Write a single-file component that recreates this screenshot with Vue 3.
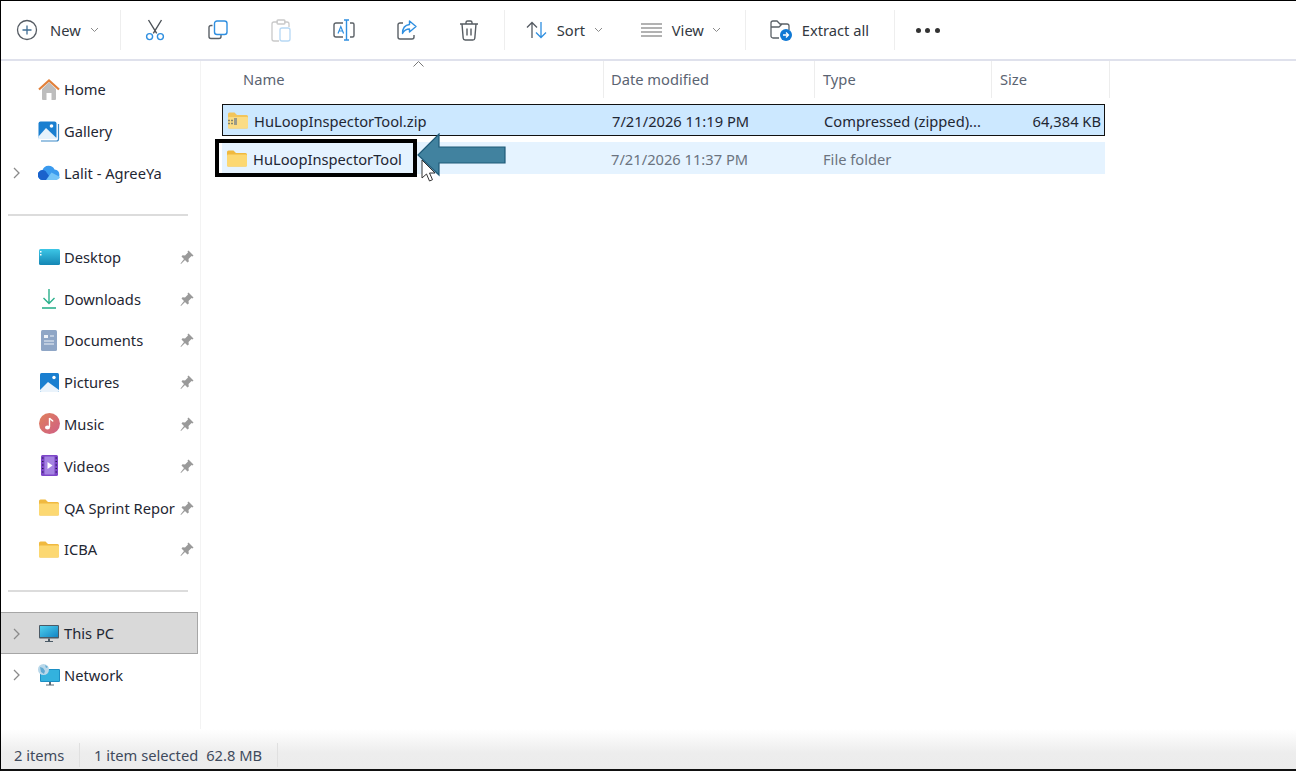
<template>
  <div class="window">
    <header class="toolbar">
      <button class="tool new">
        <svg width="22" height="22" viewBox="0 0 22 22" fill="none" stroke="#555b63" stroke-width="1.3"><circle cx="11" cy="11" r="9.5" /><path d="M11 6.500v9M6.500 11h9" stroke="#3f6d94" /></svg>
        <span class="tool-label">New</span>
        <svg class="chev" width="9" height="6" viewBox="0 0 9 6" fill="none" stroke="#8a8a8a"><path d="M1 1l3.500 3.500L8 1" /></svg>
      </button>
      <i class="sep"></i>
      <div class="icon-tools">
        <button class="icon-tool">
          <svg width="20" height="22" viewBox="0 0 20 22" fill="none" stroke-width="1.4"><path d="M3.500 1l8.200 13.400M16.500 1L8.300 14.400" stroke="#4c5258" /><circle cx="4.600" cy="17.600" r="3" stroke="#2f8fe0" /><circle cx="15.400" cy="17.600" r="3" stroke="#2f8fe0" /></svg>
        </button>
        <button class="icon-tool">
          <svg width="20" height="20" viewBox="0 0 20 20" fill="none" stroke-width="1.4"><path d="M4.500 5.500H3A2 2 0 0 0 1 7.500v9a2 2 0 0 0 2 2h8a2 2 0 0 0 2-2V15" stroke="#5a6066" /><rect x="6.500" y="1" width="12.500" height="13.500" rx="2.500" stroke="#2f8fe0" /></svg>
        </button>
        <button class="icon-tool">
          <svg width="20" height="23" viewBox="0 0 20 23" fill="none" stroke-width="1.3"><path d="M7 3H3a2 2 0 0 0-2 2v15a2 2 0 0 0 2 2h5M13 3h3a2 2 0 0 1 2 2v3" stroke="#c9c9c9" /><rect x="6" y="1" width="8" height="4" rx="1" stroke="#c9c9c9" /><rect x="9" y="9" width="10" height="13" rx="2" stroke="#b6d8f4" /></svg>
        </button>
        <button class="icon-tool">
          <svg width="22" height="22" viewBox="0 0 22 22" fill="none" stroke-width="1.4"><path d="M10 4H3a2 2 0 0 0-2 2v10a2 2 0 0 0 2 2h7M17 4h2.500A1.500 1.500 0 0 1 21 5.500v11a1.500 1.500 0 0 1-1.500 1.500H17" stroke="#5a6066" /><path d="M13.500 1v20M11 1h5M11 21h5" stroke="#2f8fe0" /><path d="M5 14.500L7.800 7.500 10.600 14.500M6 12h3.600" stroke="#2f8fe0" stroke-width="1.200" /></svg>
        </button>
        <button class="icon-tool">
          <svg width="20" height="20" viewBox="0 0 20 20" fill="none" stroke-width="1.4"><path d="M6 3H3a2 2 0 0 0-2 2v12a2 2 0 0 0 2 2h12a2 2 0 0 0 2-2v-2" stroke="#5a6066" /><path d="M12.500 1L19 6.500 12.500 12V9C9 9 7 10.500 5.500 13.500 5.500 8.500 8 5 12.500 4.500z" stroke="#2f8fe0" stroke-linejoin="round" /></svg>
        </button>
        <button class="icon-tool">
          <svg width="20" height="21" viewBox="0 0 20 21" fill="none" stroke="#565c62" stroke-width="1.4"><path d="M1 4h18M7 4V2.500A1.500 1.500 0 0 1 8.500 1h3A1.500 1.500 0 0 1 13 2.500V4M3 4l1.200 14.200A2 2 0 0 0 6.200 20h7.600a2 2 0 0 0 2-1.800L17 4M8 8.500v7M12 8.500v7" /></svg>
        </button>
      </div>
      <i class="sep"></i>
      <button class="tool sort">
        <svg width="21" height="18" viewBox="0 0 21 18" fill="none" stroke-width="1.3"><path d="M6 17V1.500M1 6.500l5-5 5 5" stroke="#555b63" /><path d="M15 1v15.500M10 11.500l5 5 5-5" stroke="#2f8fe0" /></svg>
        <span class="tool-label">Sort</span>
        <svg class="chev" width="9" height="6" viewBox="0 0 9 6" fill="none" stroke="#8a8a8a"><path d="M1 1l3.500 3.500L8 1" /></svg>
      </button>
      <button class="tool view">
        <svg width="21" height="14" viewBox="0 0 21 14" fill="none" stroke="#666" stroke-width="1.100"><path d="M0 1h21M0 5h21M0 9h21M0 13h21" /></svg>
        <span class="tool-label">View</span>
        <svg class="chev" width="9" height="6" viewBox="0 0 9 6" fill="none" stroke="#8a8a8a"><path d="M1 1l3.500 3.500L8 1" /></svg>
      </button>
      <i class="sep"></i>
      <button class="tool extract">
        <svg width="22" height="21" viewBox="0 0 22 21" fill="none"><path d="M9 18H3a2 2 0 0 1-2-2V3a2 2 0 0 1 2-2h4l3 3h7a2 2 0 0 1 2 2v4M1 7h8l3-3" stroke="#5a6066" stroke-width="1.300" /><circle cx="16" cy="15" r="6" fill="#0f78d4" /><path d="M13 15h5.500M16 12.500l2.500 2.500-2.500 2.500" stroke="#fff" stroke-width="1.300" /></svg>
        <span class="tool-label">Extract all</span>
      </button>
      <i class="sep"></i>
      <button class="more"><b></b><b></b><b></b></button>
    </header>

    <div class="body">
      <nav class="sidebar">
        <template v-for="group in navGroups" :key="group[0].name">
          <div
            v-for="item in group"
            :key="item.name"
            class="nav-row"
            :class="{ active: item.active }"
          >
            <svg v-if="item.expand" class="expander" width="7" height="12" viewBox="0 0 7 12" fill="none" stroke="#8a8a8a" stroke-width="1.300"><path d="M1 1l5 5-5 5" /></svg>
            <span class="nav-icon" v-html="icons[item.icon]"></span>
            <span class="nav-name">{{ item.name }}</span>
            <svg v-if="item.pin" class="pin" width="14" height="14" viewBox="0 0 14 14" fill="#9a9a9a"><path d="M8.500 0.500L13.500 5.500 12.500 6.500 11.500 6 8.500 9 8.800 11.500 7.500 12.500 1.500 6.500 2.500 5.200 5 5.500 8 2.500 7.500 1.500zM4 9l1 1-4 4-.5-.500z" /></svg>
          </div>
          <hr class="nav-divider" />
        </template>
      </nav>

      <main class="files">
        <div class="sort-caret">
          <svg width="11" height="6" viewBox="0 0 11 6" fill="none" stroke="#777"><path d="M.5 5.500l5-5 5 5" /></svg>
        </div>
        <div class="columns">
          <div class="col first">Name</div>
          <div class="col second">Date modified</div>
          <div class="col">Type</div>
          <div class="col">Size</div>
        </div>

        <div class="rows">
          <div class="file-row selected">
            <div class="cell name">
              <svg width="20" height="17" viewBox="0 0 20 17"><path d="M0 2a1.500 1.500 0 0 1 1.500-1.500h5L9 3h9.500A1.500 1.500 0 0 1 20 4.500V15a1.500 1.500 0 0 1-1.500 1.500h-17A1.500 1.500 0 0 1 0 15z" fill="#f2c55c" /><rect y="5" width="20" height="11.500" rx="1" fill="#fbdc85" /><path d="M0 8.500h9M0 11.500h9" stroke="#85856e" stroke-width="1.300" stroke-dasharray="2 1" /><rect x="6" y="6" width="3" height="7" fill="#9b9b8a" /></svg>
              <span>HuLoopInspectorTool.zip</span>
            </div>
            <div class="cell">7/21/2026 11:19 PM</div>
            <div class="cell">Compressed (zipped)...</div>
            <div class="cell size">64,384 KB</div>
          </div>
          <div class="file-row folder">
            <div class="cell name">
              <svg width="20" height="17" viewBox="0 0 20 17"><path d="M0 2a1.500 1.500 0 0 1 1.500-1.500h5L9 3h9.500A1.500 1.500 0 0 1 20 4.500V15a1.500 1.500 0 0 1-1.500 1.500h-17A1.500 1.500 0 0 1 0 15z" fill="#f0b93f" /><rect y="4.500" width="20" height="12" rx="1" fill="#fcd872" /></svg>
              <span>HuLoopInspectorTool</span>
            </div>
            <div class="cell dim">7/21/2026 11:37 PM</div>
            <div class="cell dim">File folder</div>
            <div class="cell"></div>
          </div>
        </div>

        <div class="callout"></div>
        <svg class="arrow" width="90" height="50" viewBox="0 0 90 50">
          <path d="M1 22L22 1V14H88V30H22V42z" fill="#41829f" stroke="#1f5a78" stroke-width="1.200" />
        </svg>
        <svg class="cursor" width="16" height="24" viewBox="0 0 16 24">
          <path d="M1 1v18l4.500-4 3 7 3-1.300-3-6.700H14z" fill="#fff" stroke="#333" stroke-width="1" />
        </svg>
      </main>
    </div>

    <footer class="status">
      <span class="count">2 items</span>
      <i class="status-sep"></i>
      <span class="selection">1 item selected</span>
      <span class="bytes">62.8 MB</span>
      <i class="status-sep"></i>
    </footer>
  </div>
</template>

<script setup>
const folder = '<svg width="20" height="17" viewBox="0 0 20 17"><path d="M0 2a1.500 1.500 0 0 1 1.500-1.500h5L9 3h9.500A1.500 1.500 0 0 1 20 4.500V15a1.500 1.500 0 0 1-1.500 1.500h-17A1.500 1.500 0 0 1 0 15z" fill="#f0b93f"/><rect y="4.500" width="20" height="12" rx="1" fill="#fcd872"/></svg>'

const icons = {
  home: '<svg width="22" height="21" viewBox="0 0 22 21"><path d="M4 10L11 3l7 7v10a1 1 0 0 1-1 1h-3.500v-7h-5v7H5a1 1 0 0 1-1-1z" fill="#bdbdbd"/><path d="M1 10.500L11 1.500l10 9" fill="none" stroke="#e2803a" stroke-width="2.200"/></svg>',
  gallery: '<svg width="22" height="21" viewBox="0 0 22 21"><path d="M20.500 3v15a2 2 0 0 1-2 2H3" fill="none" stroke="#3c8ac8" stroke-width="1.200"/><rect x="0.500" y="0.500" width="18" height="17.500" rx="2" fill="#1a7fd0"/><path d="M.5 15.500L8 7l10.500 10v1H.5z" fill="#e6f2fb"/><circle cx="13.500" cy="5" r="1.800" fill="#fff"/></svg>',
  cloud: '<svg width="22" height="15" viewBox="0 0 22 15"><path d="M5 15a5 5 0 0 1-.500-10A6.500 6.500 0 0 1 16.500 4.500 5.300 5.300 0 0 1 17 15z" fill="#3a9aee"/><path d="M5 15a5 5 0 0 1-.500-10c1 0 2 .3 3 1L14 15z" fill="#1a62cc"/><path d="M8 15l5.500-7.500L22 12c-.500 2-2.500 3-5 3z" fill="#74c4f8"/></svg>',
  desktop: '<svg width="21" height="16" viewBox="0 0 21 16"><defs><linearGradient id="dsk" x1="0" y1="0" x2="0" y2="1"><stop offset="0" stop-color="#3cc6e6"/><stop offset="1" stop-color="#1486b4"/></linearGradient></defs><rect width="21" height="16" rx="1.500" fill="url(#dsk)"/><rect x="1" y="2" width="1.500" height="1.500" fill="#fff"/><rect x="1" y="5" width="1.500" height="1.500" fill="#fff"/></svg>',
  downloads: '<svg width="16" height="20" viewBox="0 0 16 20" fill="none" stroke="#2bb08c" stroke-width="1.400"><path d="M8 0v14M2.500 9L8 14.500 13.500 9"/><path d="M1 19h14" stroke-width="1.600"/></svg>',
  documents: '<svg width="16" height="21" viewBox="0 0 16 21"><rect width="16" height="21" rx="1.500" fill="#8fa6c6"/><path d="M3 5h4v3H3z" fill="#eef2f8"/><path d="M9 6h4M3 11h10M3 14h10" stroke="#eef2f8" stroke-width="1.100"/></svg>',
  pictures: '<svg width="19" height="19" viewBox="0 0 19 19"><rect width="19" height="19" rx="1.500" fill="#1a7fd0"/><path d="M0 17L8 9l11 8v.500A1.500 1.500 0 0 1 17.500 19h-16A1.500 1.500 0 0 1 0 17.500z" fill="#eaf3fb"/><circle cx="14" cy="4.500" r="1.700" fill="#fff"/></svg>',
  music: '<svg width="21" height="21" viewBox="0 0 21 21"><defs><linearGradient id="mus" x1="0" y1="0" x2="1" y2="1"><stop offset="0" stop-color="#e0805a"/><stop offset="1" stop-color="#cf5f86"/></linearGradient></defs><circle cx="10.500" cy="10.500" r="10.500" fill="url(#mus)"/><path d="M10.500 5v9" stroke="#fff" stroke-width="1.400"/><path d="M10.500 5c1 1.800 3 2 3.500 3.500" stroke="#fff" stroke-width="1.400" fill="none"/><ellipse cx="8.500" cy="14.500" rx="2.500" ry="2" fill="#fff"/></svg>',
  videos: '<svg width="17" height="21" viewBox="0 0 17 21"><rect width="17" height="21" rx="1.500" fill="#7d46c8"/><rect x="3.500" y="1.500" width="10" height="18" fill="#a583e2"/><path d="M6.500 7l5 3.500-5 3.500z" fill="#fff"/><path d="M1 3h1.500M1 6.500h1.500M1 10h1.500M1 13.500h1.500M1 17h1.500M14.500 3H16M14.500 6.500H16M14.500 10H16M14.500 13.500H16M14.500 17H16" stroke="#2b1b55" stroke-width="1.200"/></svg>',
  folder,
  pc: '<svg width="20" height="17" viewBox="0 0 20 17"><defs><linearGradient id="pc" x1="0" y1="0" x2="1" y2="1"><stop offset="0" stop-color="#4fd0ee"/><stop offset="1" stop-color="#1385c4"/></linearGradient></defs><rect width="20" height="13.500" rx="1" fill="#4b5a66"/><rect x="1" y="1" width="18" height="11" fill="url(#pc)"/><path d="M9 13.500h2V16H9zM6 16h8v1H6z" fill="#4b5a66"/></svg>',
  network: '<svg width="22" height="22" viewBox="0 0 22 22"><rect x="2" y="5" width="20" height="13" rx="1" fill="#1c8fc4"/><rect x="3" y="6" width="18" height="11" fill="#33b2de"/><path d="M11 18h2v2.500h-2zM8 20.500h8v1H8z" fill="#5b6a76"/><circle cx="5.500" cy="5.500" r="5.500" fill="#b9d8ea"/><path d="M2 3l3 1 2 3-1 3-3-2zM7 1l3 2-2 1z" fill="#5fa9d2"/></svg>'
}

const navGroups = [
  [
    { name: 'Home', icon: 'home' },
    { name: 'Gallery', icon: 'gallery' },
    { name: 'Lalit - AgreeYa', icon: 'cloud', expand: true }
  ],
  [
    { name: 'Desktop', icon: 'desktop', pin: true },
    { name: 'Downloads', icon: 'downloads', pin: true },
    { name: 'Documents', icon: 'documents', pin: true },
    { name: 'Pictures', icon: 'pictures', pin: true },
    { name: 'Music', icon: 'music', pin: true },
    { name: 'Videos', icon: 'videos', pin: true },
    { name: 'QA Sprint Repor', icon: 'folder', pin: true },
    { name: 'ICBA', icon: 'folder', pin: true }
  ],
  [
    { name: 'This PC', icon: 'pc', expand: true, active: true },
    { name: 'Network', icon: 'network', expand: true }
  ]
]
</script>

<style>
html, body { margin: 0; overflow: hidden; background: #fff; }
</style>

<style scoped>
.window {
  width: 1296px;
  height: 771px;
  box-sizing: border-box;
  border-top: 1px solid #000;
  border-left: 1px solid #000;
  border-bottom: 2px solid #111;
  display: flex;
  flex-direction: column;
  overflow: hidden;
  font-family: "Noto Sans", "Open Sans", sans-serif;
  font-size: 14.700px;
  color: #1c2430;
  background: #fff;
}
button {
  all: unset;
  display: flex;
  align-items: center;
  justify-content: center;
  box-sizing: border-box;
}
.toolbar {
  height: 60px;
  flex: none;
  display: flex;
  align-items: center;
  box-sizing: border-box;
  border-bottom: 2px solid #dfe1ec;
}
.tool { height: 40px; font-size: 14.700px; color: #33393f; }
.tool-label { white-space: nowrap; }
.new { width: 119px; justify-content: flex-start; padding-left: 15px; }
.new .tool-label { margin-left: 12px; }
.new .chev { margin-left: 9px; }
.sort { width: 108px; justify-content: flex-start; padding-left: 21px; }
.sort .tool-label { margin-left: 10px; }
.sort .chev { margin-left: 9px; }
.view { width: 132px; justify-content: flex-start; padding-left: 28px; }
.view .tool-label { margin-left: 10px; }
.view .chev { margin-left: 8px; }
.extract { width: 148px; justify-content: flex-start; padding-left: 24px; }
.extract .tool-label { margin-left: 10px; }
.sep { width: 1px; height: 40px; flex: none; background: #eeeeee; }
.icon-tools { display: flex; padding: 0 3px; }
.icon-tool { width: 62.800px; height: 40px; }
.more { display: flex; gap: 4.500px; margin-left: 21px; }
.more b { width: 5px; height: 5px; border-radius: 50%; background: #333; }

.body { flex: 1; display: flex; min-height: 0; }
.sidebar {
  width: 200px;
  flex: none;
  box-sizing: border-box;
  padding-top: 7.500px;
  border-right: 1px solid #f3f3f3;
}
.nav-row {
  height: 41.800px;
  width: 197px;
  box-sizing: border-box;
  display: flex;
  align-items: center;
  position: relative;
  padding-left: 37px;
}
.nav-row.active {
  background: #d9d9d9;
  border: 1px solid #a6a6a6;
  border-left: none;
  padding-left: 37px;
}
.expander { position: absolute; left: 12px; top: 15px; }
.nav-icon {
  width: 22px;
  flex: none;
  display: flex;
  align-items: center;
  justify-content: center;
}
.nav-name { margin-left: 4px; white-space: nowrap; color: #1f2733; }
.pin { position: absolute; left: 179px; top: 14px; }
.nav-divider {
  width: 180px;
  margin: 20px 0 20px 7px;
  border: none;
  border-top: 2px solid #dcdcdc;
  height: 0;
}
.nav-divider:last-child { display: none; }

.files { flex: 1; position: relative; min-width: 0; }
.sort-caret { position: absolute; left: 212px; top: 0; line-height: 0; }
.columns {
  height: 37px;
  display: grid;
  grid-template-columns: 403px 211px 177px 118px;
  color: #5b6472;
}
.col {
  box-sizing: border-box;
  padding: 8px 0 0 8px;
  border-right: 1px solid #ededed;
}
.col.first { padding-left: 42px; }
.col.second { padding-left: 7px; }
.rows {
  margin: 6px 0 0 21px;
  width: 883px;
  display: flex;
  flex-direction: column;
  gap: 6px;
}
.file-row {
  height: 32px;
  box-sizing: border-box;
  display: grid;
  grid-template-columns: 381px 212px 176px 114px;
  align-items: center;
}
.selected { background: #cce8ff; border: 1px solid #111; }
.folder { background: #e5f3ff; }
.cell { padding: 1px 0 0 8px; white-space: nowrap; color: #1f2733; }
.cell.name { padding-left: 5px; display: flex; align-items: center; gap: 6px; }
.cell.size { padding: 1px 5px 0 0; text-align: right; }
.cell.dim { color: #6b7380; }

.callout {
  position: absolute;
  left: 14px;
  top: 78px;
  width: 202px;
  height: 38px;
  box-sizing: border-box;
  border: 4px solid #000;
}
.arrow { position: absolute; left: 216px; top: 72px; }
.cursor { position: absolute; left: 220px; top: 98px; }

.status {
  height: 40px;
  flex: none;
  display: flex;
  align-items: center;
  box-sizing: border-box;
  padding: 12px 0 0 13px;
  background: linear-gradient(#fff 0, #ededed 60%, #ececec 100%);
  color: #3f4a5c;
}
.status-sep { width: 1px; height: 24px; background: #e0e0e0; }
.count { width: 65px; }
.selection { margin-left: 14px; }
.bytes { margin-left: 8px; width: 71px; }
</style>
